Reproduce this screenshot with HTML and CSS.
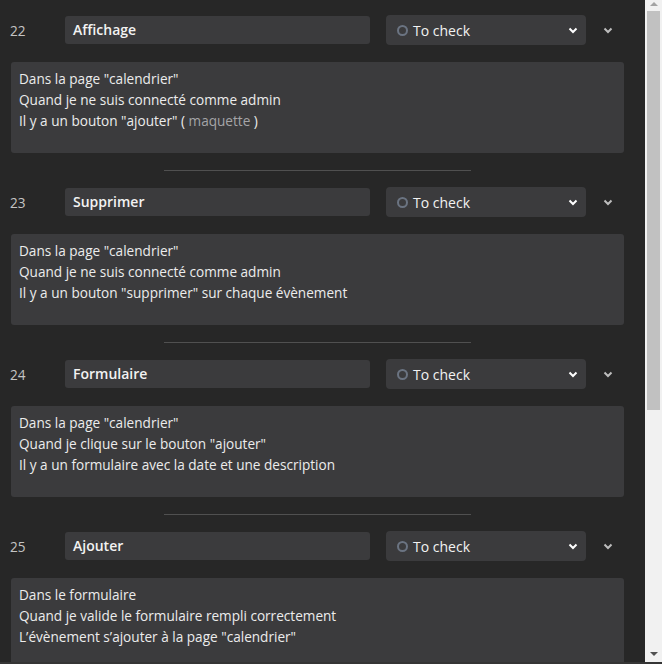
FILE: index.html
```html
<!DOCTYPE html>
<html lang="fr">
<head>
<meta charset="utf-8">
<title>Tests</title>
<link rel="stylesheet" href="styles.css">
</head>
<body>
<div class="frame">
  <main class="list">
    <section class="item">
      <div class="row">
        <span class="num">22</span>
        <div class="title">Affichage</div>
        <div class="select"><span class="dot"></span><span class="label">To check</span>
          <svg class="caret" width="10" height="7" viewBox="0 0 10 7"><path d="M1.5 1.5 L5 5 L8.5 1.5" fill="none" stroke="#fff" stroke-width="2"/></svg>
        </div>
        <svg class="toggle" width="10" height="7" viewBox="0 0 10 7"><path d="M1.5 1.5 L5 5 L8.5 1.5" fill="none" stroke="#bdbdbd" stroke-width="2"/></svg>
      </div>
      <div class="desc">
        <p>Dans la page "calendrier"</p>
        <p>Quand je ne suis connecté comme admin</p>
        <p>Il y a un bouton "ajouter" ( <span class="link">maquette</span> )</p>
      </div>
      <hr class="divider">
    </section>
    <section class="item">
      <div class="row">
        <span class="num">23</span>
        <div class="title">Supprimer</div>
        <div class="select"><span class="dot"></span><span class="label">To check</span>
          <svg class="caret" width="10" height="7" viewBox="0 0 10 7"><path d="M1.5 1.5 L5 5 L8.5 1.5" fill="none" stroke="#fff" stroke-width="2"/></svg>
        </div>
        <svg class="toggle" width="10" height="7" viewBox="0 0 10 7"><path d="M1.5 1.5 L5 5 L8.5 1.5" fill="none" stroke="#bdbdbd" stroke-width="2"/></svg>
      </div>
      <div class="desc">
        <p>Dans la page "calendrier"</p>
        <p>Quand je ne suis connecté comme admin</p>
        <p>Il y a un bouton "supprimer" sur chaque évènement</p>
      </div>
      <hr class="divider">
    </section>
    <section class="item">
      <div class="row">
        <span class="num">24</span>
        <div class="title">Formulaire</div>
        <div class="select"><span class="dot"></span><span class="label">To check</span>
          <svg class="caret" width="10" height="7" viewBox="0 0 10 7"><path d="M1.5 1.5 L5 5 L8.5 1.5" fill="none" stroke="#fff" stroke-width="2"/></svg>
        </div>
        <svg class="toggle" width="10" height="7" viewBox="0 0 10 7"><path d="M1.5 1.5 L5 5 L8.5 1.5" fill="none" stroke="#bdbdbd" stroke-width="2"/></svg>
      </div>
      <div class="desc">
        <p>Dans la page "calendrier"</p>
        <p>Quand je clique sur le bouton "ajouter"</p>
        <p>Il y a un formulaire avec la date et une description</p>
      </div>
      <hr class="divider">
    </section>
    <section class="item">
      <div class="row">
        <span class="num">25</span>
        <div class="title">Ajouter</div>
        <div class="select"><span class="dot"></span><span class="label">To check</span>
          <svg class="caret" width="10" height="7" viewBox="0 0 10 7"><path d="M1.5 1.5 L5 5 L8.5 1.5" fill="none" stroke="#fff" stroke-width="2"/></svg>
        </div>
        <svg class="toggle" width="10" height="7" viewBox="0 0 10 7"><path d="M1.5 1.5 L5 5 L8.5 1.5" fill="none" stroke="#bdbdbd" stroke-width="2"/></svg>
      </div>
      <div class="desc">
        <p>Dans le formulaire</p>
        <p>Quand je valide le formulaire rempli correctement</p>
        <p>L’évènement s’ajouter à la page "calendrier"</p>
      </div>
    </section>
  </main>
  <div class="scrollbar">
    <div class="sb-btn"><span class="tri-up"></span></div>
    <div class="sb-track">
      <div class="sb-thumb"></div>
    </div>
    <div class="sb-btn sb-btn-down"><span class="tri-down"></span></div>
  </div>
</div>
</body>
</html>
```

FILE: styles.css
```css
* { box-sizing: border-box; }
html, body {
  margin: 0;
  padding: 0;
  background: #272727;
  overflow: hidden;
}
body {
  font-family: "Open Sans", Lato, "Noto Sans", "Liberation Sans", sans-serif;
  font-size: 13.6px;
  font-weight: 500;
  color: #ececec;
}
.frame {
  display: flex;
  width: 662px;
  height: 664px;
  border-bottom: 2px solid #353535;
  overflow: hidden;
}
.list {
  width: 645px;
  flex: 0 0 645px;
  height: 662px;
  overflow: hidden;
  padding-top: 15px;
}
.item {
  display: flex;
  flex-direction: column;
}
.row {
  display: flex;
  align-items: center;
  height: 30px;
  padding-left: 10px;
}
.num {
  width: 55px;
  color: #c4c4c4;
  font-size: 13.6px;
  font-weight: 400;
}
.title {
  width: 305px;
  height: 28px;
  line-height: 28px;
  background: #3b3b3d;
  border-radius: 3px;
  padding-left: 8px;
  font-weight: 600;
  font-size: 14px;
  color: #f2f2f2;
}
.select {
  margin-left: 16px;
  width: 200px;
  height: 30px;
  background: #3b3b3d;
  border-radius: 4px;
  display: flex;
  align-items: center;
  padding: 0 8px 0 11px;
}
.dot {
  width: 11px;
  height: 11px;
  border: 2px solid #6b7482;
  border-radius: 50%;
  margin-right: 5px;
}
.label {
  flex: 1;
  font-size: 14px;
  color: #f2f2f2;
}
.caret { display: block; }
.toggle {
  display: block;
  margin-left: 17px;
}
.desc {
  margin: 17px 0 0 11px;
  width: 613px;
  height: 91px;
  background: #3b3b3d;
  border-radius: 3px;
  padding: 6px 8px 0;
  line-height: 21px;
}
.desc p { margin: 0; }
.link { color: #a5a5a8; }
.divider {
  width: 307px;
  margin: 17px 0 16px 164px;
  border: 0;
  height: 1px;
  background: #505050;
}
.scrollbar {
  flex: 0 0 17px;
  width: 17px;
  height: 662px;
  background: #f1f1f1;
  display: flex;
  flex-direction: column;
}
.sb-btn {
  height: 11px;
  display: flex;
  justify-content: center;
  align-items: flex-start;
  padding-top: 2px;
}
.sb-btn-down {
  height: 15px;
  align-items: flex-start;
  padding-top: 5px;
}
.tri-up {
  width: 0; height: 0;
  border-left: 4px solid transparent;
  border-right: 4px solid transparent;
  border-bottom: 4px solid #a3a3a3;
}
.tri-down {
  width: 0; height: 0;
  border-left: 4px solid transparent;
  border-right: 4px solid transparent;
  border-top: 4px solid #505050;
}
.sb-track {
  flex: 1;
  padding: 0 2px;
}
.sb-thumb {
  height: 399px;
  background: #c1c1c1;
}
```
